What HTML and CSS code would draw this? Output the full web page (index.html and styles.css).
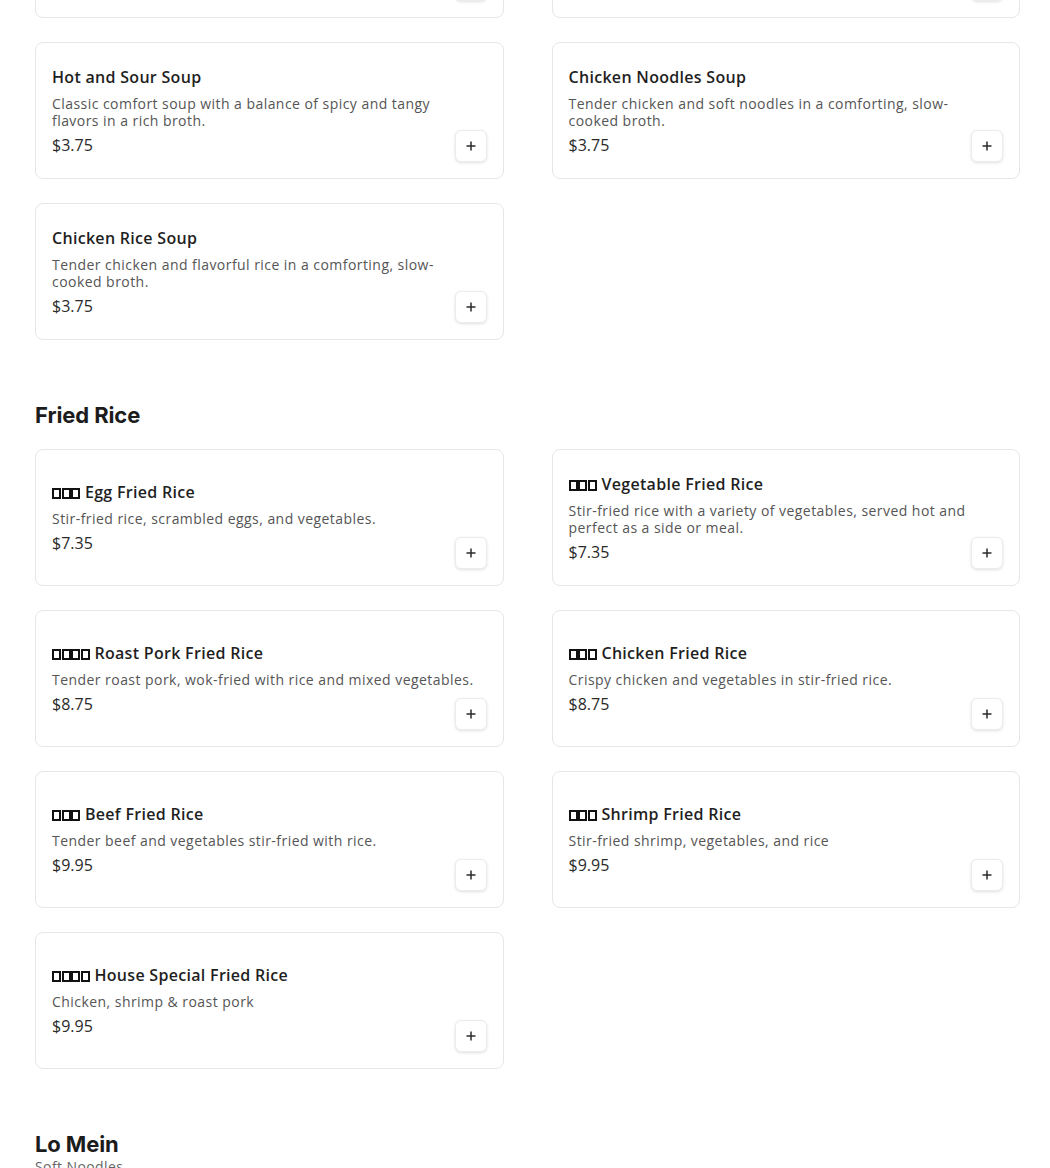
FILE: index.html
```html
<!DOCTYPE html>
<html lang="en">
<head>
<meta charset="utf-8">
<title>Menu</title>
<link rel="stylesheet" href="styles.css">
</head>
<body>
<main class="menu">
  <section class="section">
    <h2 class="section-title">Soup</h2>
    <div class="grid">
      <article class="card">
        <div class="info">
          <h3 class="name">Wonton Soup</h3>
          <p class="desc">Delicate pork wontons in a light, savory broth.</p>
          <p class="price">$3.75</p>
        </div>
        <button class="add" aria-label="Add"><svg viewBox="0 0 12 12" width="12" height="12"><path d="M6 1.5v9M1.5 6h9" stroke="currentColor" stroke-width="1.5" fill="none"/></svg></button>
      </article>
      <article class="card">
        <div class="info">
          <h3 class="name">Egg Drop Soup</h3>
          <p class="desc">Silky egg ribbons in a warm, seasoned broth.</p>
          <p class="price">$3.75</p>
        </div>
        <button class="add" aria-label="Add"><svg viewBox="0 0 12 12" width="12" height="12"><path d="M6 1.5v9M1.5 6h9" stroke="currentColor" stroke-width="1.5" fill="none"/></svg></button>
      </article>
      <article class="card">
        <div class="info">
          <h3 class="name">Hot and Sour Soup</h3>
          <p class="desc">Classic comfort soup with a balance of spicy and tangy flavors in a rich broth.</p>
          <p class="price">$3.75</p>
        </div>
        <button class="add" aria-label="Add"><svg viewBox="0 0 12 12" width="12" height="12"><path d="M6 1.5v9M1.5 6h9" stroke="currentColor" stroke-width="1.5" fill="none"/></svg></button>
      </article>
      <article class="card">
        <div class="info">
          <h3 class="name">Chicken Noodles Soup</h3>
          <p class="desc">Tender chicken and soft noodles in a comforting, slow-cooked broth.</p>
          <p class="price">$3.75</p>
        </div>
        <button class="add" aria-label="Add"><svg viewBox="0 0 12 12" width="12" height="12"><path d="M6 1.5v9M1.5 6h9" stroke="currentColor" stroke-width="1.5" fill="none"/></svg></button>
      </article>
      <article class="card">
        <div class="info">
          <h3 class="name">Chicken Rice Soup</h3>
          <p class="desc">Tender chicken and flavorful rice in a comforting, slow-cooked broth.</p>
          <p class="price">$3.75</p>
        </div>
        <button class="add" aria-label="Add"><svg viewBox="0 0 12 12" width="12" height="12"><path d="M6 1.5v9M1.5 6h9" stroke="currentColor" stroke-width="1.5" fill="none"/></svg></button>
      </article>
    </div>
  </section>

  <section class="section">
    <h2 class="section-title">Fried Rice</h2>
    <div class="grid">
      <article class="card">
        <div class="info">
          <h3 class="name"><span class="tofu"></span><span class="tofu"></span><span class="tofu"></span> Egg Fried Rice</h3>
          <p class="desc">Stir-fried rice, scrambled eggs, and vegetables.</p>
          <p class="price">$7.35</p>
        </div>
        <button class="add" aria-label="Add"><svg viewBox="0 0 12 12" width="12" height="12"><path d="M6 1.5v9M1.5 6h9" stroke="currentColor" stroke-width="1.5" fill="none"/></svg></button>
      </article>
      <article class="card">
        <div class="info">
          <h3 class="name"><span class="tofu"></span><span class="tofu"></span><span class="tofu"></span> Vegetable Fried Rice</h3>
          <p class="desc">Stir-fried rice with a variety of vegetables, served hot and perfect as a side or meal.</p>
          <p class="price">$7.35</p>
        </div>
        <button class="add" aria-label="Add"><svg viewBox="0 0 12 12" width="12" height="12"><path d="M6 1.5v9M1.5 6h9" stroke="currentColor" stroke-width="1.5" fill="none"/></svg></button>
      </article>
      <article class="card">
        <div class="info">
          <h3 class="name"><span class="tofu"></span><span class="tofu"></span><span class="tofu"></span><span class="tofu"></span> Roast Pork Fried Rice</h3>
          <p class="desc">Tender roast pork, wok-fried with rice and mixed vegetables.</p>
          <p class="price">$8.75</p>
        </div>
        <button class="add" aria-label="Add"><svg viewBox="0 0 12 12" width="12" height="12"><path d="M6 1.5v9M1.5 6h9" stroke="currentColor" stroke-width="1.5" fill="none"/></svg></button>
      </article>
      <article class="card">
        <div class="info">
          <h3 class="name"><span class="tofu"></span><span class="tofu"></span><span class="tofu"></span> Chicken Fried Rice</h3>
          <p class="desc">Crispy chicken and vegetables in stir-fried rice.</p>
          <p class="price">$8.75</p>
        </div>
        <button class="add" aria-label="Add"><svg viewBox="0 0 12 12" width="12" height="12"><path d="M6 1.5v9M1.5 6h9" stroke="currentColor" stroke-width="1.5" fill="none"/></svg></button>
      </article>
      <article class="card">
        <div class="info">
          <h3 class="name"><span class="tofu"></span><span class="tofu"></span><span class="tofu"></span> Beef Fried Rice</h3>
          <p class="desc">Tender beef and vegetables stir-fried with rice.</p>
          <p class="price">$9.95</p>
        </div>
        <button class="add" aria-label="Add"><svg viewBox="0 0 12 12" width="12" height="12"><path d="M6 1.5v9M1.5 6h9" stroke="currentColor" stroke-width="1.5" fill="none"/></svg></button>
      </article>
      <article class="card">
        <div class="info">
          <h3 class="name"><span class="tofu"></span><span class="tofu"></span><span class="tofu"></span> Shrimp Fried Rice</h3>
          <p class="desc">Stir-fried shrimp, vegetables, and rice</p>
          <p class="price">$9.95</p>
        </div>
        <button class="add" aria-label="Add"><svg viewBox="0 0 12 12" width="12" height="12"><path d="M6 1.5v9M1.5 6h9" stroke="currentColor" stroke-width="1.5" fill="none"/></svg></button>
      </article>
      <article class="card">
        <div class="info">
          <h3 class="name"><span class="tofu"></span><span class="tofu"></span><span class="tofu"></span><span class="tofu"></span> House Special Fried Rice</h3>
          <p class="desc">Chicken, shrimp &amp; roast pork</p>
          <p class="price">$9.95</p>
        </div>
        <button class="add" aria-label="Add"><svg viewBox="0 0 12 12" width="12" height="12"><path d="M6 1.5v9M1.5 6h9" stroke="currentColor" stroke-width="1.5" fill="none"/></svg></button>
      </article>
    </div>
  </section>

  <section class="section">
    <h2 class="section-title">Lo Mein</h2>
    <p class="section-sub">Soft Noodles</p>
    <div class="grid">
      <article class="card">
        <div class="info">
          <h3 class="name">Chicken Lo Mein</h3>
          <p class="desc">Soft egg noodles tossed with chicken and vegetables.</p>
          <p class="price">$9.95</p>
        </div>
        <button class="add" aria-label="Add"><svg viewBox="0 0 12 12" width="12" height="12"><path d="M6 1.5v9M1.5 6h9" stroke="currentColor" stroke-width="1.5" fill="none"/></svg></button>
      </article>
    </div>
  </section>
</main>
</body>
</html>
```

FILE: styles.css
```css
* { box-sizing: border-box; }

html, body {
  margin: 0;
  padding: 0;
  background: #fff;
  overflow: hidden;
}

body {
  font-family: "Open Sans", "Noto Sans", sans-serif;
  color: #1a1a1a;
}

.menu {
  width: 985px;
  margin: -167px 0 0 35px;
}

.section + .section {
  margin-top: 61px;
}

.section-title {
  margin: 0;
  font-family: "Inter", "Noto Sans", sans-serif;
  font-size: 22px;
  font-weight: 700;
  line-height: 28px;
  color: #1c1c1c;
  letter-spacing: -0.1px;
}

.section-sub {
  margin: 0;
  font-size: 14px;
  line-height: 17px;
  color: #666;
  letter-spacing: 0.4px;
}

.section-title + .grid,
.section-sub + .grid {
  margin-top: 20px;
}

.grid {
  display: grid;
  grid-template-columns: 1fr 1fr;
  column-gap: 48px;
  row-gap: 24px;
}

.card {
  display: grid;
  grid-template-columns: 1fr;
  grid-template-rows: 1fr;
  min-height: 137px;
  padding: 16px;
  border: 1px solid #e6e6e6;
  border-radius: 8px;
  background: #fff;
}

.info {
  grid-area: 1 / 1;
  align-self: center;
  min-width: 0;
  padding-right: 10px;
}

.name {
  margin: 0 0 8px;
  font-size: 16px;
  line-height: 20px;
  font-weight: 600;
  color: #1f1f1f;
  letter-spacing: 0.3px;
}

.tofu {
  display: inline-block;
  width: 9px;
  height: 11px;
  border: 2px solid #111;
  margin-right: 0.5px;
  vertical-align: -1px;
}

.desc {
  margin: 0 0 6px;
  font-size: 14px;
  line-height: 17px;
  color: #555;
  letter-spacing: 0.45px;
}

.price {
  margin: 0;
  font-size: 16px;
  line-height: 20px;
  color: #2a2a2a;
}

.add {
  grid-area: 1 / 1;
  align-self: end;
  justify-self: end;
  width: 32px;
  height: 32px;
  padding: 0;
  display: flex;
  align-items: center;
  justify-content: center;
  background: #fff;
  color: #2b2b2b;
  border: 1px solid #ececec;
  border-radius: 6px;
  box-shadow: 0 1px 3px rgba(0, 0, 0, 0.12);
  cursor: pointer;
}
```
